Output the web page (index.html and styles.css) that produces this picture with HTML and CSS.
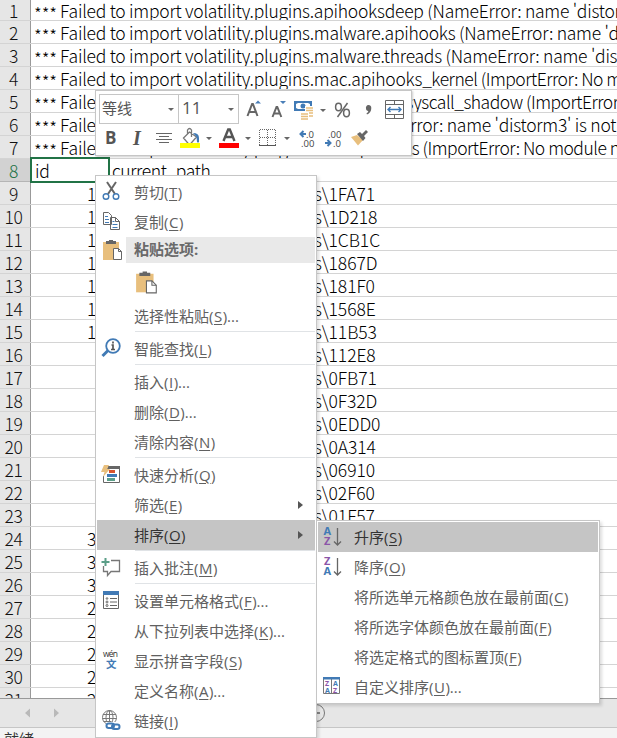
FILE: index.html
```html
<!DOCTYPE html>
<html lang="zh-CN">
<head>
<meta charset="utf-8">
<title>工作表</title>
<link rel="stylesheet" href="styles.css">
</head>
<body>
<main class="app">
<div class="sheet">
<div class="row first"><span class="num">1</span><span class="cell"><i>***</i> Failed to import volatility.plugins.apihooksdeep (NameError: name 'distorm3' is not</span></div>
<div class="row"><span class="num">2</span><span class="cell"><i>***</i> Failed to import volatility.plugins.malware.apihooks (NameError: name 'distorm3' is</span></div>
<div class="row"><span class="num">3</span><span class="cell"><i>***</i> Failed to import volatility.plugins.malware.threads (NameError: name 'distorm3' is</span></div>
<div class="row"><span class="num">4</span><span class="cell"><i>***</i> Failed to import volatility.plugins.mac.apihooks<span class="tight">_kernel (ImportError: No module</span></span></div>
<div class="row"><span class="num">5</span><span class="cell"><i>***</i> Failed to import volatility.plugins.mac.check_s<span class="tight">yscall_shadow (ImportError: No</span></span></div>
<div class="row"><span class="num">6</span><span class="cell"><i>***</i> Failed to import volatility.plugins.ssdt (NameError: name 'distorm3' is not defined</span></div>
<div class="row"><span class="num">7</span><span class="cell"><i>***</i> Failed to import volatility.plugins.<span class="tight">mac.apihooks (ImportError: No module named</span></span></div>
<div class="row active"><span class="num">8</span><span class="cell id">id</span><span class="cell head">current_path</span></div>
<div class="row"><span class="num">9</span><span class="val">1</span><span class="path">s\1FA71</span></div>
<div class="row"><span class="num">10</span><span class="val">1</span><span class="path">s\1D218</span></div>
<div class="row"><span class="num">11</span><span class="val">1</span><span class="path">s\1CB1C</span></div>
<div class="row"><span class="num">12</span><span class="val">1</span><span class="path">s\1867D</span></div>
<div class="row"><span class="num">13</span><span class="val">1</span><span class="path">s\181F0</span></div>
<div class="row"><span class="num">14</span><span class="val">1</span><span class="path">s\1568E</span></div>
<div class="row"><span class="num">15</span><span class="val">1</span><span class="path">s\11B53</span></div>
<div class="row"><span class="num">16</span><span class="val"></span><span class="path">s\112E8</span></div>
<div class="row"><span class="num">17</span><span class="val"></span><span class="path">s\0FB71</span></div>
<div class="row"><span class="num">18</span><span class="val"></span><span class="path">s\0F32D</span></div>
<div class="row"><span class="num">19</span><span class="val"></span><span class="path">s\0EDD0</span></div>
<div class="row"><span class="num">20</span><span class="val"></span><span class="path">s\0A314</span></div>
<div class="row"><span class="num">21</span><span class="val"></span><span class="path">s\06910</span></div>
<div class="row"><span class="num">22</span><span class="val"></span><span class="path">s\02F60</span></div>
<div class="row"><span class="num">23</span><span class="val"></span><span class="path">s\01F57</span></div>
<div class="row"><span class="num">24</span><span class="val">3</span></div>
<div class="row"><span class="num">25</span><span class="val">3</span></div>
<div class="row"><span class="num">26</span><span class="val">3</span></div>
<div class="row"><span class="num">27</span><span class="val">2</span></div>
<div class="row"><span class="num">28</span><span class="val">2</span></div>
<div class="row"><span class="num">29</span><span class="val">2</span></div>
<div class="row"><span class="num">30</span><span class="val">2</span></div>
<div class="row"><span class="num">31</span><span class="val">2</span></div>
</div>
<div class="tabs">
<svg width="617" height="28" viewBox="0 0 617 28"><path d="M30 9.500v9l-5-4.500zM54 9.500v9l5-4.500z" fill="#b9b9b9"/><circle cx="316" cy="14" r="8.500" fill="none" stroke="#777"/><path d="M312 14h8M316 10v8" stroke="#666" stroke-width="1.500"/></svg>
</div>
<div class="status">就绪</div>
</main>

<section class="toolbar">
<div class="tools">
<div class="combo font"><span>等线</span><b class="caret"></b></div><div class="combo size"><span>11</span><b class="caret"></b></div>
<svg class="t-rest" width="168" height="30" viewBox="239 93 168 30">
<g fill="none" stroke="#666" stroke-width="2"><path d="M247.500 115l4.600-12h.8l4.600 12M249.500 111h6M272.500 116l4-10h.8l4 10M274 112.500h5.500"/></g>
<path d="M255 102.500l3-3 3 3zM280 100h6l-3 3z" fill="#4a7fb8"/>
<path d="M294 100h18v10h-18z" fill="#417ab5"/><path d="M296 103l2-1h10l2 1v4l-2 1h-10l-2-1z" fill="#fff"/><circle cx="303" cy="105" r="2.500" fill="#417ab5"/>
<path d="M305 105h8v7h-4v7h-9v-8h5z" fill="#fff"/><path d="M306 107h7M306 109.500h7M301 113h7M301 115.500h7M301 118h7M309 112h4M309 115h4" stroke="#e8bf7d" stroke-width="1.700"/>
<path d="M320 108h6l-3 3z" fill="#666"/>
<g fill="none" stroke="#666" stroke-width="1.500"><ellipse cx="338.500" cy="106" rx="2.900" ry="3.700"/><ellipse cx="346.500" cy="112" rx="2.900" ry="3.700"/><path d="M347.500 102l-10 14"/></g>
<path d="M366 107.500a2.700 2.700 0 1 1 5.300-.5c0 3-1.500 5.500-4.300 6.500l-.5-1.200c1.300-.5 1.800-1.500 1.800-2.300-1.500 0-2.300-1-2.300-2.500z" fill="#666"/>
<path d="M385.500 99.500h18v18h-18zM385.500 103.500h18M385.500 113.500h18M394.500 99.500v4M394.500 113.500v4" fill="none" stroke="#666"/><path d="M388 108.500h13M390.500 106l-2.500 2.500 2.500 2.500M398.500 106l2.500 2.500-2.500 2.500" fill="none" stroke="#417ab5" stroke-width="1.400"/>
</svg>
</div>
<div class="tools second">
<span class="bold">B</span><span class="ital">I</span>
<svg class="t-format" width="222" height="28" viewBox="152 125 222 28">
<path d="M156 133.500h16M159 136.500h10M156 139.500h16M159 142.500h10" stroke="#666"/>
<path d="M183.500 138l6-6 7 5-7 8zM187.500 134v-4q2-3 4 0v7" fill="#fff" stroke="#777" stroke-width="1.300"/><path d="M193 133q6 0 6 5v4q-1 1-2 0l-.5-5z" fill="#417ab5"/>
<path d="M180 143h20v5h-20z" fill="#ff0"/><path d="M219 143h20v5h-20z" fill="red"/>
<path d="M206 137h6l-3 3zM245 137h6l-3 3zM284 137h6l-3 3z" fill="#666"/>
<path d="M223.500 141l4.700-11.500h1.600l4.700 11.500M225.500 137h7" stroke="#555" stroke-width="2.400" fill="none"/>
<path d="M259.500 145v-15.500h16v15.500M267.500 130v15M260 137.500h16" stroke="#666" fill="none" stroke-dasharray="1 1"/><path d="M259 145.500h17" stroke="#555"/>
<g stroke="#417ab5" stroke-width="2" fill="none"><path d="M300 134h6M303.500 131l-3 3 3 3M325 143h6M327.500 140l3 3-3 3"/></g>
<g class="dec"><text x="306" y="137.500">.0</text><text x="301" y="146.500">.00</text><text x="328" y="137.500">.00</text><text x="333" y="146.500">.0</text></g>
<path d="M351 137l6-2 6 5-5 5.500z" fill="#e8bf7d"/><path d="M357 134l3-2 2 2 4-4 2 2-4 4 1.500 2-2.500 3z" fill="#666"/>
</svg>
</div>
</section>

<nav class="menu main">
<div class="item"><svg width="22" height="22" viewBox="0 0 22 22"><path d="M6 1l8 12M15 1L7 13" stroke="#666" stroke-width="2" fill="none"/><g fill="none" stroke="#417ab5" stroke-width="1.400"><circle cx="5" cy="15.500" r="2.800"/><circle cx="15" cy="15.500" r="2.800"/></g></svg><span>剪切(<u>T</u>)</span></div>
<div class="item"><svg width="22" height="22" viewBox="0 0 22 22"><path d="M2.500 1.500h5l3 3v9h-8zM9.500 6.500h5l4 4v8h-9z" fill="#fff" stroke="#666"/><path d="M14.500 6.500v4h4" fill="none" stroke="#666"/><path d="M4 5.500h3M4 8.500h4M4 11.500h4M11.500 10.500h2M11.500 13.500h5M11.500 16.500h5" stroke="#417ab5"/></svg><span>复制(<u>C</u>)</span></div>
<div class="item heading"><svg width="22" height="22" viewBox="0 0 22 22"><path d="M2 3h16v18H2z" fill="#e8bf7d"/><path d="M5 2h3v-1h4v1h3v3H5z" fill="#666"/><path d="M12.500 9.500h5l3 3v8h-8z" fill="#fff" stroke="#666"/><path d="M17.500 9.500v3h3" fill="none" stroke="#666"/></svg><span>粘贴选项:</span></div>
<div class="paste"><svg width="24" height="25" viewBox="0 0 22 22"><path d="M1 3h16v17H1z" fill="#e8bf7d"/><path d="M4 2h3v-1h4v1h3v3H4z" fill="#666"/><path d="M10.500 9.500h5l4 4v7h-9z" fill="#fff" stroke="#666"/><path d="M15.500 9.500v4h4" fill="none" stroke="#666"/></svg></div>
<div class="item"><span>选择性粘贴(<u>S</u>)...</span></div>
<hr>
<div class="item"><svg width="22" height="22" viewBox="0 0 22 22"><circle cx="12" cy="8" r="6.800" fill="none" stroke="#417ab5" stroke-width="1.800"/><path d="M7 12.500L1.500 18" stroke="#417ab5" stroke-width="3"/><path d="M12 3.500v2M10.500 7h1.500v4.500M10 11.500h4" stroke="#555" stroke-width="1.700" fill="none"/></svg><span>智能查找(<u>L</u>)</span></div>
<hr>
<div class="item"><span>插入(<u>I</u>)...</span></div>
<div class="item"><span>删除(<u>D</u>)...</span></div>
<div class="item"><span>清除内容(<u>N</u>)</span></div>
<hr>
<div class="item"><svg width="22" height="22" viewBox="0 0 22 22"><path d="M2.500 12v6.500h16V2.500H7" fill="none" stroke="#666"/><path d="M7 2h12v3H6z" fill="#666"/><path d="M3 1h5L6 5h3l-7 8 1.500-5H0z" fill="#e8bf7d"/><path d="M8 6h6v3H8z" fill="#d8532d"/><path d="M6 10h10v3H6z" fill="#417ab5"/><path d="M6 14h8v3H6z" fill="#5b9e88"/></svg><span>快速分析(<u>Q</u>)</span></div>
<div class="item"><span>筛选(<u>E</u>)</span><b class="arrow"></b></div>
<div class="item selected"><span>排序(<u>O</u>)</span><b class="arrow"></b></div>
<hr>
<div class="item"><svg width="22" height="22" viewBox="0 0 22 22"><path d="M10 3.500h8.500v11H10l-3.500 4v-4h-4V9" fill="none" stroke="#777" stroke-width="1.300"/><path d="M4.500 1v8M.5 5h8" stroke="#5b9e88" stroke-width="2"/></svg><span>插入批注(<u>M</u>)</span></div>
<hr>
<div class="item"><svg width="22" height="22" viewBox="0 0 22 22"><path d="M2.500 2.500h15v16h-15z" fill="#fff" stroke="#666"/><path d="M2 1h16v4H2z" fill="#417ab5"/><path d="M9 8.500h7M9 12h7M9 15.500h7" stroke="#666"/><g fill="none" stroke="#666"><circle cx="6" cy="8.500" r=".8"/><circle cx="6" cy="12" r="1"/><circle cx="6" cy="15.500" r="1"/></g></svg><span>设置单元格格式(<u>F</u>)...</span></div>
<div class="item"><span>从下拉列表中选择(<u>K</u>)...</span></div>
<div class="item"><svg width="22" height="22" viewBox="0 0 22 22"><text class="wen" x="2" y="7" textLength="15">wén</text><text class="wen-han" x="5" y="18">文</text></svg><span>显示拼音字段(<u>S</u>)</span></div>
<div class="item"><span>定义名称(<u>A</u>)...</span></div>
<div class="item"><svg width="22" height="22" viewBox="0 0 22 22"><g fill="none" stroke="#777"><circle cx="8.500" cy="7.500" r="7"/><ellipse cx="8.500" cy="7.500" rx="3.500" ry="7"/><path d="M2 4.500h13M1.500 8.500h14M2.500 11.500h8M8.500 .5v13"/></g><path d="M5 12h15v8H5z" fill="#fff"/><g fill="none" stroke="#417ab5" stroke-width="2"><rect x="5.500" y="13.500" width="7.500" height="4.500" rx="2.200"/><rect x="11" y="14.500" width="7.500" height="4.500" rx="2.200"/></g></svg><span>链接(<u>I</u>)</span></div>
</nav>

<nav class="menu sub">
<div class="item selected"><svg width="22" height="22" viewBox="0 0 22 22"><text class="blue" x="1.500" y="9">A</text><text class="purple" x="2" y="19">Z</text><path d="M15.500 2v17M12 15.500l3.500 3.500 3.500-3.500" fill="none" stroke="#666" stroke-width="1.300"/></svg><span>升序(<u>S</u>)</span></div>
<div class="item"><svg width="22" height="22" viewBox="0 0 22 22"><text class="purple" x="2" y="9">Z</text><text class="blue" x="1.500" y="19">A</text><path d="M15.500 2v17M12 15.500l3.500 3.500 3.500-3.500" fill="none" stroke="#666" stroke-width="1.300"/></svg><span>降序(<u>O</u>)</span></div>
<div class="item"><span>将所选单元格颜色放在最前面(<u>C</u>)</span></div>
<div class="item"><span>将所选字体颜色放在最前面(<u>F</u>)</span></div>
<div class="item"><span>将选定格式的图标置顶(<u>F</u>)</span></div>
<div class="item"><svg width="22" height="22" viewBox="0 0 22 22"><path d="M1.500 2.500h16v15h-16zM9.500 3v14" fill="#fff" stroke="#777"/><path d="M1 1h17v2.500H1z" fill="#417ab5"/><g class="tiny"><text class="purple" x="3" y="10">Z</text><text class="blue" x="3" y="16.500">A</text><text class="blue" x="11" y="10">A</text><text class="purple" x="11" y="16.500">Z</text></g></svg><span>自定义排序(<u>U</u>)...</span></div>
</nav>
</body>
</html>
```
FILE: styles.css
```css
* { box-sizing: border-box; }
body { margin: 0; width: 617px; height: 738px; overflow: hidden; position: relative; background: #fff; font-family: "Open Sans", "Noto Sans CJK SC", sans-serif; }
.app { display: flex; flex-direction: column; height: 738px; overflow: hidden; }
.sheet { height: 699px; flex: none; overflow: hidden; border-bottom: 1px solid #999; font: 300 17.5px/24px "Noto Sans CJK SC", sans-serif; color: #000; }
.row { display: flex; height: 23px; white-space: pre; overflow: hidden; border-bottom: 1px solid #d4d4d4; }
.row.first { height: 21px; }
.row.first > * { line-height: 21px; }
.num { flex: none; width: 31px; height: 23px; padding-right: 3px; text-align: center; background: #e6e6e6; border-right: 1px solid #999; border-bottom: 1px solid #b5b5b5; letter-spacing: -.3px; color: #111; }
.first .num { height: 21px; }
.cell { padding-left: 3px; letter-spacing: -.25px; }
.cell i { font-style: normal; display: inline-block; width: 22.500px; letter-spacing: -.1px; position: relative; top: 3px; }
.tight { letter-spacing: -.5px; }
.active { overflow: visible; }
.active .num { background: #d2d2d2; color: #217346; }
.cell.id { flex: none; width: 80px; height: 26px; margin: -2px 0 0 -1px; padding-left: 3px; border: 2px solid #217346; background: #fff; position: relative; }
.cell.head { padding-left: 2px; letter-spacing: -.4px; }
.val { flex: none; width: 283px; padding-left: 56px; }
.path { letter-spacing: -.1px; }
.tabs { flex: none; height: 29px; background: #e6e6e6; border-bottom: 1px solid #c6c6c6; }
.tabs svg { display: block; }
.status { height: 10px; overflow: hidden; background: #f3f3f3; padding-left: 4px; font-size: 15px; line-height: 22px; color: #333; }

.toolbar { position: absolute; left: 95px; top: 90px; width: 317px; height: 66px; padding: 3px; background: #fff; border: 1px solid #c6c6c6; box-shadow: 1px 1px 2px #0003; }
.tools { display: flex; height: 31px; }
.combo { flex: none; display: flex; align-items: center; justify-content: space-between; height: 30px; border: 1px solid #c6c6c6; padding: 0 4px 4px 2px; font-size: 15px; color: #555; }
.font { width: 80px; }
.size { width: 60px; border-left: 0; padding-left: 3px; }
.size span { font-size: 17px; }
.caret { border: 3px solid transparent; border-top-color: #666; border-bottom: 0; margin-top: 4px; }
.t-rest { flex: none; }
.second { height: 28px; align-items: center; }
.t-format { flex: none; margin-left: 0; }
.bold, .ital { flex: none; width: 27px; padding-left: 6px; font-weight: 700; font-size: 17px; line-height: 24px; margin-top: -2px; color: #555; }
.ital { width: 26px; padding-left: 7px; font-family: "Liberation Serif", serif; font-style: italic; font-size: 20px; }
.dec { font: 9.5px "Open Sans", sans-serif; fill: #444; }

.menu { position: absolute; background: #fff; border: 1px solid #c6c6c6; padding: 1px; box-shadow: 2px 2px 3px #0002; color: #606060; font-size: 15px; }
.main { left: 95px; top: 175px; width: 222px; height: 563px; }
.sub { left: 316px; top: 520px; width: 284px; height: 184px; }
.item { position: relative; display: flex; align-items: center; height: 30px; padding-left: 37px; line-height: 22px; white-space: nowrap; }
.item > svg { flex: none; margin-left: -33px; margin-right: 11px; overflow: visible; }
.sub .item { padding-left: 36px; }
.sub .item > svg { margin-left: -32px; margin-right: 10px; }
.item u { text-decoration-thickness: 1px; text-underline-offset: 2px; padding: 0 .5px; }
.heading { height: 26px; font-weight: 700; background: linear-gradient(to right, #fff 29px, #e9e9e9 29px); }
.heading span { margin-top: -2px; color: #6a6a6a; }
.paste { height: 38px; padding: 7px 0 0 38px; }
.selected { background: #c5c5c5; color: #333; }
.arrow { margin-left: auto; margin-right: 12px; border: 4px solid transparent; border-left: 5px solid #555; border-right: 0; }
hr { height: 3px; margin: 0 0 0 38px; border: 0; background: linear-gradient(#e0e3e6 1px, #fff 1px); }
.wen { font-size: 8.500px; fill: #333; }
.wen-han { font-size: 10.5px; fill: #417ab5; font-weight: 700; }
.blue, .purple { font: 700 11px "Open Sans", sans-serif; fill: #417ab5; }
.purple { fill: #8a55a8; }
.tiny text { font-size: 7px; }
```
